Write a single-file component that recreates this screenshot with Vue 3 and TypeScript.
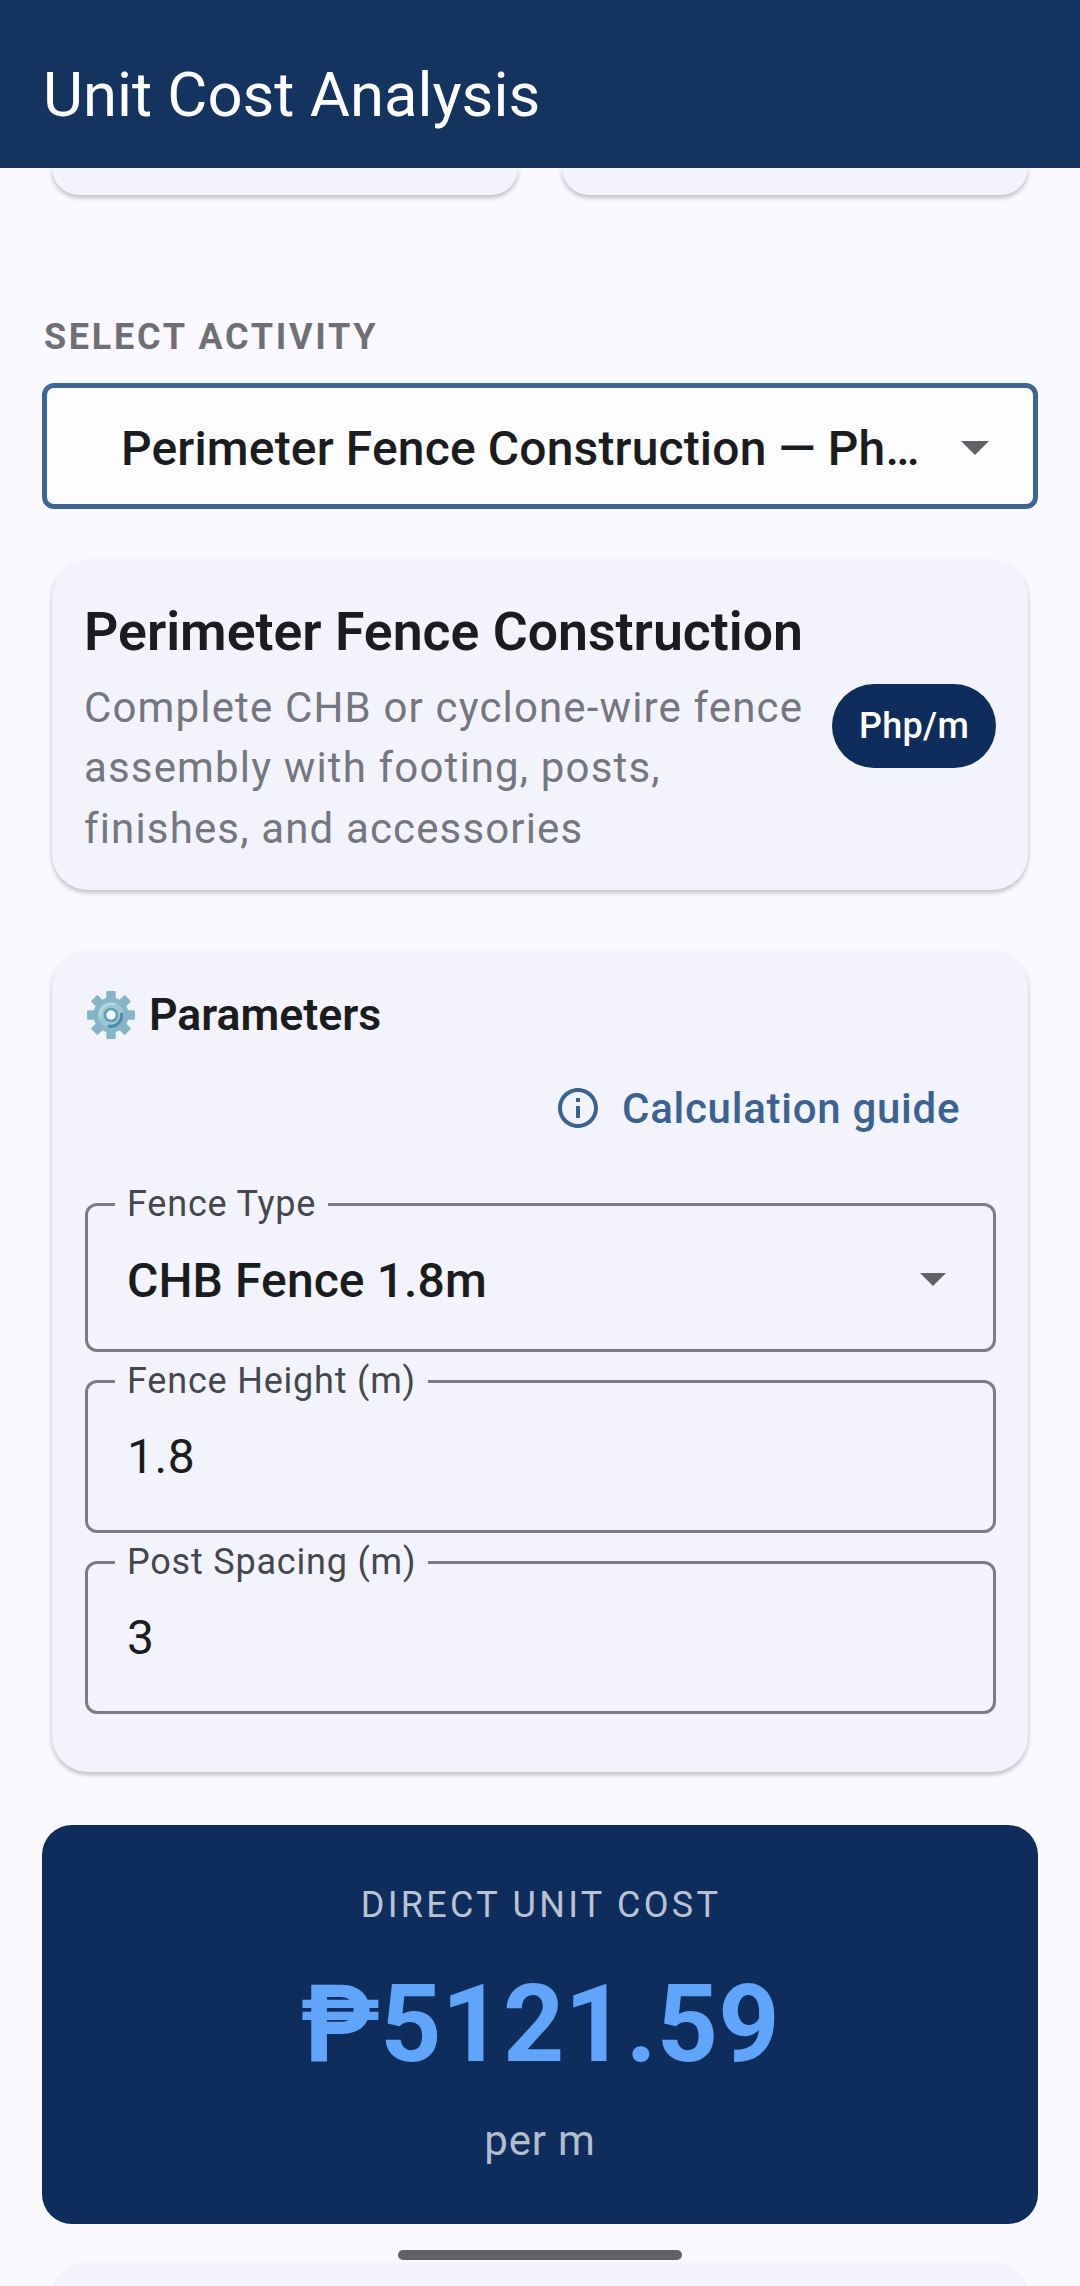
<script setup lang="ts">
interface Field { label: string; value: string; select?: boolean }
const fields: Field[] = [
  { label: 'Fence Type', value: 'CHB Fence 1.8m', select: true },
  { label: 'Fence Height (m)', value: '1.8' },
  { label: 'Post Spacing (m)', value: '3' },
]
const teeth = [0, 45, 90, 135, 180, 225, 270, 315]
</script>

<template>
  <div class="app">
    <header class="bar"><h1>Unit Cost Analysis</h1></header>
    <main class="content">
      <div class="top-row">
        <div class="card stub"></div>
        <div class="card stub"></div>
      </div>

      <div class="section-label">SELECT ACTIVITY</div>
      <div class="activity">
        <span class="activity-text">Perimeter Fence Construction — Ph…</span>
        <span class="arrow"></span>
      </div>

      <section class="card summary">
        <div class="summary-text">
          <h2>Perimeter Fence Construction</h2>
          <p>Complete CHB or cyclone-wire fence assembly with footing, posts, finishes, and accessories</p>
        </div>
        <span class="pill">Php/m</span>
      </section>

      <section class="card params">
        <div class="params-head">
          <svg class="gear" viewBox="0 0 48 48" aria-hidden="true">
            <rect v-for="a in teeth" :key="a" x="19.5" y="1" width="9" height="12" rx="1" fill="#85b5c7" :transform="`rotate(${a} 24 24)`" />
            <circle cx="24" cy="24" r="17" fill="#85b5c7" />
            <circle cx="24" cy="24" r="12.5" fill="#9cc6d6" />
            <path d="M14 26a10.5 10.5 0 0 1 14-12" fill="none" stroke="#b9dbe6" stroke-width="2" />
            <path d="M34 22a10.5 10.5 0 0 1-13 12.500" fill="none" stroke="#4f8ba3" stroke-width="3" />
            <circle cx="24" cy="24" r="7" fill="#5f9db4" />
            <circle cx="24" cy="24" r="4.500" fill="#f3f5fc" />
          </svg>
          <h3>Parameters</h3>
        </div>
        <div class="guide">
          <svg class="info" viewBox="0 0 24 24" aria-hidden="true">
            <path d="M11 7h2v2h-2zm0 4h2v6h-2zm1-9C6.480 2 2 6.480 2 12s4.480 10 10 10 10-4.480 10-10S17.520 2 12 2zm0 18c-4.410 0-8-3.590-8-8s3.590-8 8-8 8 3.590 8 8-3.590 8-8 8z" fill="#3c6292" />
          </svg>
          <span>Calculation guide</span>
        </div>
        <div class="fields">
          <div v-for="f in fields" :key="f.label" class="field" :class="{ 'is-select': f.select }">
            <span class="field-label">{{ f.label }}</span>
            <span class="field-value">{{ f.value }}</span>
            <span v-if="f.select" class="arrow"></span>
          </div>
        </div>
      </section>

      <section class="result">
        <div class="result-label">DIRECT UNIT COST</div>
        <div class="result-value">₱5121.59</div>
        <div class="result-unit">per m</div>
      </section>

      <div class="card next"></div>
    </main>
    <div class="home"></div>
  </div>
</template>

<style>
html, body { margin: 0; padding: 0; background: #faf9ff; }
</style>

<style scoped>
* { box-sizing: border-box; }
.app {
  position: relative;
  width: 1080px;
  height: 2286px;
  overflow: hidden;
  background: #faf9ff;
  font-family: Roboto, "Noto Sans", sans-serif;
  color: #1a1c1e;
}
.bar {
  height: 168px;
  background: #14345f;
  padding: 62px 0 0 43px;
}
.bar h1 {
  margin: 0;
  font-size: 61.6px;
  line-height: 66px;
  font-weight: 400;
  color: #fff;
}
.content { padding: 0 42px; }
.card {
  background: #f3f4fb;
  border-radius: 36px;
  margin: 0 10px;
  box-shadow: 0 3px 4px rgba(0, 0, 0, 0.2), 0 1px 9px rgba(0, 0, 0, 0.05);
}
.top-row { display: flex; justify-content: space-between; height: 27px; }
.stub { width: 466px; height: 27px; border-radius: 0 0 36px 36px; }
.section-label {
  margin-top: 122px;
  font-size: 36px;
  line-height: 40px;
  font-weight: 700;
  letter-spacing: 2.7px;
  color: #6f7075;
  margin-left: 2px;
}
.activity {
  margin: 26px 0 0;
  height: 126px;
  border: 5px solid #3f6595;
  border-radius: 12px;
  background: #fdfcff;
  display: flex;
  align-items: center;
  padding: 5px 0 0 74px;
  position: relative;
}
.activity-text { font-size: 48px; line-height: 56px; font-weight: 500; letter-spacing: 0.15px; white-space: nowrap; }
.arrow {
  position: absolute;
  width: 0;
  height: 0;
  border-left: 14px solid transparent;
  border-right: 14px solid transparent;
  border-top: 14px solid #616266;
}
.activity .arrow { left: 914px; top: 53px; }
.summary {
  margin-top: 52px;
  height: 329px;
  padding: 0 32px;
  display: flex;
  align-items: center;
  justify-content: space-between;
}
.summary-text { padding-top: 6px; }
.summary h2 { margin: -2px 0 0; font-size: 53.6px; line-height: 72px; font-weight: 600; white-space: nowrap; }
.summary p {
  margin: 10px 0 0;
  width: 740px;
  font-size: 42px;
  line-height: 60.500px;
  letter-spacing: 1.15px;
  color: #74777f;
}
.pill {
  width: 164px;
  height: 84px;
  border-radius: 42px;
  background: #0f2d5c;
  color: #fff;
  font-size: 36px;
  font-weight: 500;
  letter-spacing: 0.3px;
  display: flex;
  align-items: center;
  justify-content: center;
  flex: none;
}
.params { margin-top: 62px; height: 820px; padding: 38px 32px 0 34px; }
.params-head { display: flex; align-items: center; gap: 13px; height: 50px; }
.gear { width: 50px; height: 50px; flex: none; }
.params-head h3 { margin: 0; font-size: 44.6px; line-height: 50px; font-weight: 600; }
.guide {
  display: flex;
  align-items: center;
  margin: 40px 0 0 468px;
  height: 56px;
  color: #3c6292;
  font-size: 42px;
  font-weight: 500;
  letter-spacing: 0.73px;
  gap: 20px;
}
.info { width: 48px; height: 48px; flex: none; }
.fields { margin: 67px 0 0 -1px; }
.field {
  position: relative;
  height: 153px;
  border: 3px solid #7b7d84;
  border-radius: 12px;
  margin-bottom: 28px;
  padding: 46px 0 0 39px;
}
.field.is-select { height: 149px; padding-top: 47px; margin-bottom: 28px; }
.field-label {
  position: absolute;
  left: 27px;
  top: -23px;
  padding: 0 12px;
  font-size: 36px;
  line-height: 42px;
  letter-spacing: 0.8px;
  color: #44474e;
  background: #f3f4fb;
  white-space: nowrap;
}
.field-value { display: block; font-size: 48px; line-height: 56px; letter-spacing: 0.5px; }
.is-select .field-value { font-weight: 500; letter-spacing: 0.1px; }
.field .arrow { left: 832px; top: 67px; border-left-width: 13px; border-right-width: 13px; border-top-width: 13px; }
.result {
  margin-top: 53px;
  height: 399px;
  background: #0f2d5c;
  border-radius: 30px;
  text-align: center;
  padding-top: 58px;
}
.result-label {
  font-size: 36px;
  line-height: 44px;
  letter-spacing: 3.3px;
  color: #b9c3d3;
  padding-left: 2px;
}
.result-value {
  margin-top: 36px;
  font-size: 107px;
  line-height: 124px;
  font-weight: 700;
  color: #60a5fa;
}
.result-unit {
  margin-top: 29px;
  font-size: 42px;
  line-height: 50px;
  letter-spacing: 0.85px;
  color: #b3bdcd;
}
.next { margin-top: 40px; height: 200px; }
.home {
  position: absolute;
  left: 398px;
  top: 2250px;
  width: 284px;
  height: 10px;
  border-radius: 5px;
  background: #616266;
}
</style>
